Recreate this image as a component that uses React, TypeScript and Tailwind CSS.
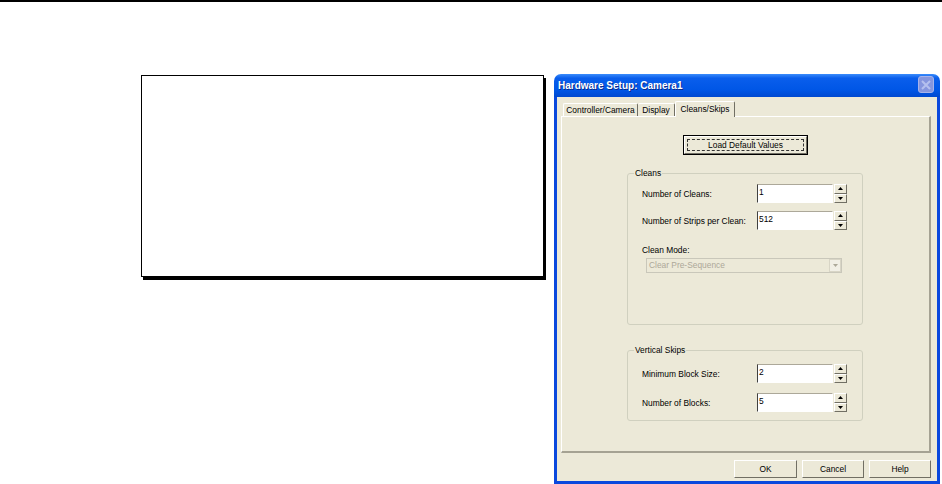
import React from "react";

const raised =
  "bg-[#ECE9D8] border border-t-white border-l-white border-r-[#716F64] border-b-[#716F64]";

function Arrow({ up, color = "#000" }: { up?: boolean; color?: string }) {
  return (
    <svg width="5" height="3" viewBox="0 0 5 3">
      <path d={up ? "M2.5 0L5 3L0 3Z" : "M0 0L5 0L2.5 3Z"} fill={color} />
    </svg>
  );
}

function Spinner() {
  return (
    <div className="flex flex-col w-[13px] h-[19px] ml-[1px]">
      <div className={`flex-1 flex items-center justify-center ${raised}`}>
        <Arrow up />
      </div>
      <div className={`flex-1 flex items-center justify-center ${raised}`}>
        <Arrow />
      </div>
    </div>
  );
}

function SpinRow({ label, value }: { label: string; value: string }) {
  return (
    <div className="flex items-center h-[19px]">
      <span className="w-[115px] text-[8.4px] leading-[10px]">{label}</span>
      <div className="w-[76px] h-[19px] bg-white border border-t-[#ACA899] border-l-[#404040] border-r-white border-b-white pl-[1px] pt-[2px] text-[8.4px] leading-[10px]">
        {value}
      </div>
      <Spinner />
    </div>
  );
}

function Group({
  title,
  className,
  children,
}: {
  title: string;
  className: string;
  children: React.ReactNode;
}) {
  return (
    <div className={`relative ml-[65px] w-[236px] border border-[#D0D0BF] rounded-[3px] pl-[14px] ${className}`}>
      <span className="absolute -top-[6px] left-[6px] px-[1px] bg-[#ECE9D8] text-[8.4px] leading-[10px]">
        {title}
      </span>
      {children}
    </div>
  );
}

export default function App() {
  return (
    <div className="w-[942px] h-[484px] bg-white overflow-hidden font-['Liberation_Sans',Arial,sans-serif] text-black">
      <div className="h-[2px] bg-black" />

      <div className="flex items-start pt-[72px]">
        {/* Empty framed box */}
        <div className="ml-[141px] mt-[1px] w-[403px] h-[202px] bg-white border border-black shadow-[2px_3px_0_#000]" />

        {/* Hardware Setup dialog */}
        <div className="ml-[10px] w-[386px] h-[410px] flex flex-col rounded-t-[7px] overflow-hidden">
          {/* Title bar */}
          <div className="h-[23px] flex items-center justify-between pl-[4px] pr-[6px] bg-[linear-gradient(to_bottom,#3B8CFB_0%,#0A5EEC_18%,#0056E6_70%,#0049D0_100%)]">
            <span className="text-white font-bold text-[10px] leading-none [text-shadow:1px_1px_0_#0A2B8C]">
              Hardware Setup: Camera1
            </span>
            <div className="w-[16px] h-[17px] rounded-[3px] bg-[#8696DE] border border-[#A7B3EA] flex items-center justify-center self-start mt-[2px]">
              <svg width="10" height="10" viewBox="0 0 10 10">
                <path d="M1 1L9 9M9 1L1 9" stroke="#B5C0EE" strokeWidth="2" />
              </svg>
            </div>
          </div>

          {/* Body */}
          <div className="flex-1 bg-[#ECE9D8] border-x-[3px] border-b-[3px] border-[#0A48DD] pt-[4px] pl-[4px]">
            {/* Tabs */}
            <div className="flex items-end h-[15px] pl-[2px]">
              <div className="w-[75px] h-[13px] flex items-center justify-center border-t border-l border-white border-r border-r-[#716F64] rounded-t-[2px] text-[8.4px] leading-none">
                Controller/Camera
              </div>
              <div className="w-[37px] h-[13px] flex items-center justify-center border-t border-white border-r border-r-[#716F64] rounded-t-[2px] text-[8.4px] leading-none">
                Display
              </div>
              <div className="relative z-10 -mb-px w-[60px] h-[16px] flex items-center justify-center bg-[#ECE9D8] border-t border-l border-white border-r border-r-[#716F64] rounded-t-[2px] text-[8.4px] leading-none pb-[1px]">
                Cleans/Skips
              </div>
            </div>

            {/* Tab panel */}
            <div className="w-[370px] h-[337px] border-t border-l border-white border-r-2 border-b-2 border-r-[#A5A293] border-b-[#A5A293] pt-[18px]">
              <div className="flex justify-center">
                <div className="w-[125px] h-[20px] border border-black">
                  <div className={`h-full ${raised} p-[2px]`}>
                    <div className="h-full border border-dashed border-[#333] flex items-center justify-center text-[8.4px] leading-none">
                      Load Default Values
                    </div>
                  </div>
                </div>
              </div>

              <Group title="Cleans" className="mt-[18px] h-[152px] pt-[10px]">
                <div className="flex flex-col gap-[8px]">
                  <SpinRow label="Number of Cleans:" value="1" />
                  <SpinRow label="Number of Strips per Clean:" value="512" />
                </div>
                <div className="mt-[15px] text-[8.4px] leading-[10px]">Clean Mode:</div>
                <div className="mt-[3px] ml-[4px] w-[196px] h-[15px] flex items-center justify-between border border-[#C9C7BA] bg-[#ECE9D8]">
                  <span className="pl-[2px] text-[8.4px] leading-none text-[#ACA899]">Clear Pre-Sequence</span>
                  <div className="w-[12px] h-[13px] flex items-center justify-center border border-[#D8D5C6] bg-[#F1EFE6]">
                    <Arrow color="#ACA899" />
                  </div>
                </div>
              </Group>

              <Group title="Vertical Skips" className="mt-[25px] h-[71px] pt-[13px]">
                <div className="flex flex-col gap-[10px]">
                  <SpinRow label="Minimum Block Size:" value="2" />
                  <SpinRow label="Number of Blocks:" value="5" />
                </div>
              </Group>
            </div>

            {/* Dialog buttons */}
            <div className="w-[370px] mt-[7px] flex justify-end gap-[5px]">
              {[
                ["OK", "w-[63px]"],
                ["Cancel", "w-[62px]"],
                ["Help", "w-[62px]"],
              ].map(([label, w]) => (
                <div
                  key={label}
                  className={`${w} h-[18px] flex items-center justify-center ${raised} text-[8.4px] leading-none`}
                >
                  {label}
                </div>
              ))}
            </div>
          </div>
        </div>
      </div>
    </div>
  );
}
